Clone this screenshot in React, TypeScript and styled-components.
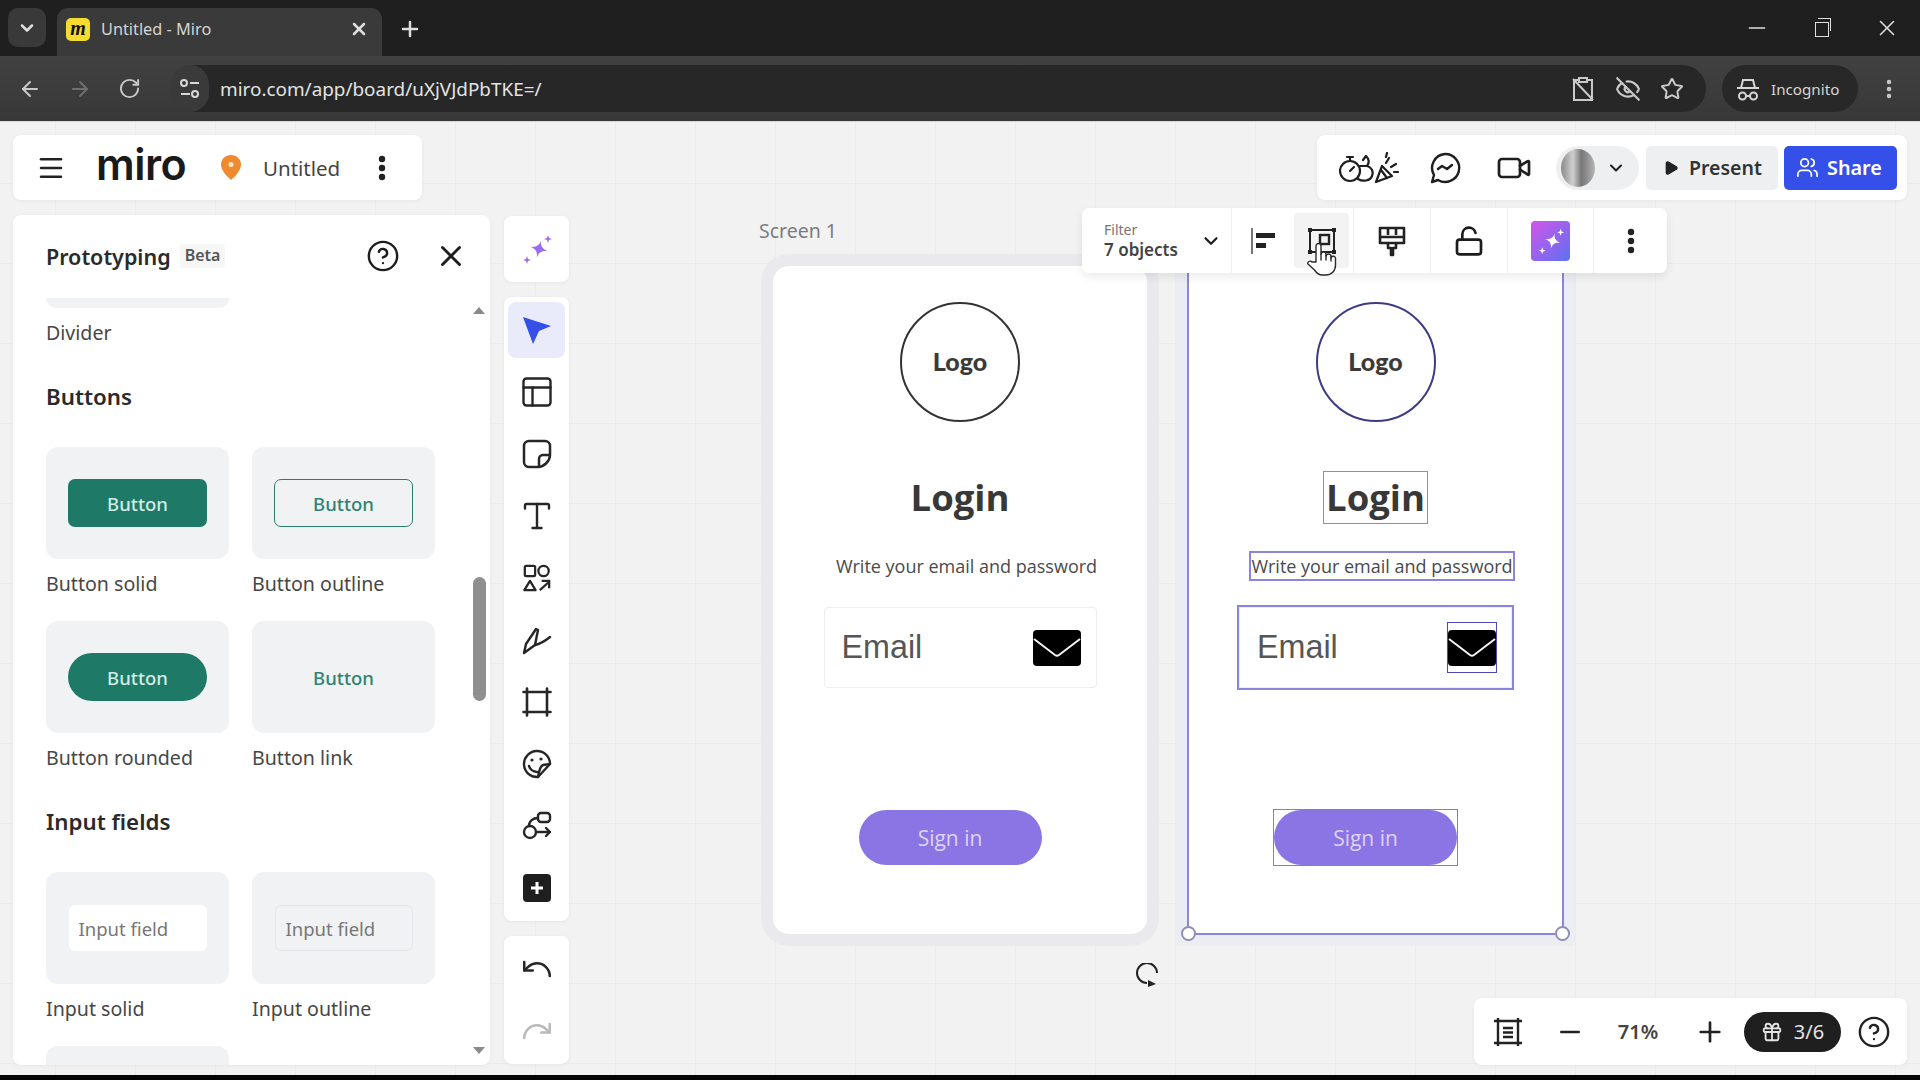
import React from "react";
import styled, { createGlobalStyle } from "styled-components";
import {
  ArrowLeft,
  ArrowRight,
  ChevronDown,
  CircleHelp,
  EllipsisVertical,
  EyeOff,
  Gift,
  LockOpen,
  Menu,
  Minus,
  PanelsTopLeft,
  Play,
  Plus,
  Redo,
  RotateCw,
  Star,
  Type,
  Undo,
  Users,
  Video,
  X,
} from "lucide-react";

const GlobalStyle = createGlobalStyle`
  html, body {
    margin: 0;
    padding: 0;
    background: #000;
    overflow: hidden;
  }
  * {
    box-sizing: border-box;
  }
`;

const UI_FONT = `"Noto Sans", "Open Sans", sans-serif`;

const Page = styled.div`
  width: 1920px;
  height: 1080px;
  display: flex;
  flex-direction: column;
  font-family: ${UI_FONT};
  overflow: hidden;
`;

// Browser chrome
const TabStrip = styled.div`
  height: 56px;
  flex: none;
  background: #1f1f1f;
  display: flex;
  align-items: flex-end;
  color: #dedede;
`;

const TabMenu = styled.div`
  width: 38px;
  height: 39px;
  margin: 0 11px 9px 8px;
  border-radius: 10px;
  background: #393939;
  display: flex;
  align-items: center;
  justify-content: center;
`;

const Tab = styled.div`
  width: 325px;
  height: 48px;
  background: #3a3a3a;
  border-radius: 11px 11px 0 0;
  display: flex;
  align-items: center;
  padding: 0 13px 6px 9px;
`;

const Favicon = styled.div`
  width: 24px;
  height: 23px;
  border-radius: 5px;
  background: #f5dc2f;
  color: #111;
  font: italic 700 20px/21px "Liberation Serif", serif;
  text-align: center;
`;

const TabTitle = styled.span`
  flex: 1;
  margin-left: 11px;
  font-size: 16.3px;
  color: #d4d4d4;
`;

const NewTab = styled.div`
  margin: 0 0 15px 16px;
  width: 24px;
  height: 24px;
  display: flex;
`;

const WindowControls = styled.div`
  margin-left: auto;
  height: 56px;
  display: flex;
  align-items: center;
  gap: 45px;
  padding-right: 20px;
`;

const RestoreIcon = styled.div`
  width: 14px;
  height: 15px;
  border: 1.5px solid #e0e0e0;
  position: relative;
  margin-top: 3px;
  &::after {
    content: "";
    position: absolute;
    top: -5px;
    left: 2px;
    width: 12px;
    height: 12px;
    border-top: 1.5px solid #e0e0e0;
    border-right: 1.5px solid #e0e0e0;
  }
`;

const Toolbar = styled.div`
  height: 66px;
  flex: none;
  background: linear-gradient(#414141, #383838);
  border-bottom: 1px solid #d8d8d8;
  display: flex;
  align-items: center;
  padding: 0 17px 0 18px;
  color: #c9c9c9;
`;

const NavButtons = styled.div`
  width: 153px;
  flex: none;
  display: flex;
  align-items: center;
  gap: 26px;
`;

const AddressBar = styled.div`
  width: 1535px;
  flex: none;
  height: 47px;
  border-radius: 24px;
  background: #272727;
  display: flex;
  align-items: center;
  padding-right: 22px;
`;

const SiteChip = styled.div`
  width: 38px;
  height: 47px;
  margin-right: 11px;
  border-radius: 24px;
  background: #3a3a3a;
  display: flex;
  align-items: center;
  justify-content: center;
`;

const Url = styled.span`
  flex: 1;
  font-size: 18.9px;
  color: #e3e3e3;
`;

const OmniIcons = styled.div`
  display: flex;
  align-items: center;
  gap: 19px;
`;

const IncognitoPill = styled.div`
  width: 136px;
  flex: none;
  height: 47px;
  margin-left: 16px;
  border-radius: 24px;
  background: #282828;
  display: flex;
  align-items: center;
  gap: 10px;
  padding-left: 13px;
  font-size: 15.2px;
  color: #d6d6d6;
`;

const BrowserMenu = styled.div`
  margin-left: 19px;
  display: flex;
`;

// Board
const Board = styled.div`
  position: relative;
  flex: 1;
  min-height: 0;
  display: flex;
  justify-content: space-between;
  padding: 13px 13px 10px 13px;
  background-color: #f2f2f3;
  background-image: linear-gradient(#ebebec 1px, transparent 1px),
    linear-gradient(90deg, #ebebec 1px, transparent 1px);
  background-size: 80px 80px;
  background-position: 55px 61px;
`;

const BottomStrip = styled.div`
  height: 5px;
  flex: none;
  background: #050505;
`;

const Canvas = styled.div`
  position: absolute;
  inset: 0;
`;

const ScreenLabel = styled.span`
  position: absolute;
  left: 759px;
  top: 95px;
  font-size: 19.5px;
  line-height: 28px;
  color: #7c7c7c;
`;

const MockFrame = styled.div<{ $left: number; $selected?: boolean }>`
  position: absolute;
  left: ${(p) => p.$left}px;
  top: 144px;
  width: ${(p) => (p.$selected ? 375 : 374)}px;
  height: 668px;
  background: #fff;
  border-radius: ${(p) => (p.$selected ? 0 : 16)}px;
  box-shadow: 0 0 0 12px ${(p) => (p.$selected ? "#ececf3" : "#e9e9ee")};
  outline: ${(p) => (p.$selected ? "2px solid #8a86de" : "none")};
  outline-offset: -1px;
  display: flex;
  flex-direction: column;
  align-items: center;
  padding-top: 36px;
  font-family: "Open Sans", sans-serif;
`;

const LogoCircle = styled.div<{ $selected?: boolean }>`
  width: 120px;
  height: 120px;
  flex: none;
  padding-bottom: 3px;
  border-radius: 50%;
  border: 2px solid ${(p) => (p.$selected ? "#3d3b86" : "#333")};
  display: flex;
  align-items: center;
  justify-content: center;
  font-family: "Lato", sans-serif;
  font-weight: 900;
  font-size: 25px;
  color: #3a3a3a;
`;

const LoginTitle = styled.div<{ $selected?: boolean }>`
  margin-top: 50px;
  padding: 0 2px;
  font-size: 36.5px;
  line-height: 51px;
  font-weight: 700;
  color: #383838;
  outline: ${(p) => (p.$selected ? "1.5px solid #8a86de" : "none")};
`;

const Hint = styled.div<{ $selected?: boolean }>`
  margin: 30px 0 0 13px;
  font-size: 18px;
  line-height: 26px;
  color: #4a4a4a;
  white-space: nowrap;
  outline: ${(p) => (p.$selected ? "2px solid #8a86de" : "none")};
`;

const EmailField = styled.div<{ $selected?: boolean }>`
  width: 273px;
  height: 81px;
  flex: none;
  margin-top: 28px;
  padding: 0 15px 0 17px;
  border-radius: ${(p) => (p.$selected ? 0 : 4)}px;
  border: 1px solid #eeeeef;
  outline: ${(p) => (p.$selected ? "2px solid #8a86de" : "none")};
  display: flex;
  align-items: center;
  justify-content: space-between;
  font-family: "Liberation Sans", sans-serif;
  font-size: 32.3px;
  color: #565656;
`;

const EnvelopeBox = styled.div<{ $selected?: boolean }>`
  height: 49px;
  padding-top: 7px;
  outline: ${(p) => (p.$selected ? "1px solid #4d49b0" : "none")};
  display: flex;
`;

const SignInBox = styled.div<{ $selected?: boolean }>`
  width: 183px;
  height: 55px;
  flex: none;
  margin: 122px 20px 0 0;
  outline: ${(p) => (p.$selected ? "1.5px solid #7f7bd8" : "none")};
`;

const SignInButton = styled.div`
  width: 100%;
  height: 100%;
  border-radius: 28px;
  background: #8b74e4;
  color: #ddd3f7;
  font-size: 21px;
  display: flex;
  align-items: center;
  justify-content: center;
`;

const Handle = styled.span<{ $side: "left" | "right" }>`
  position: absolute;
  bottom: -7px;
  ${(p) => p.$side}: -7px;
  width: 15px;
  height: 15px;
  border-radius: 50%;
  background: #fff;
  border: 2px solid #8f8fb5;
`;

const RotateCursor = styled.div`
  position: absolute;
  left: 1134px;
  top: 841px;
  display: flex;
`;

const HandCursor = styled.div`
  position: absolute;
  left: 1306px;
  top: 120px;
  display: flex;
  z-index: 6;
`;

// Floating selection toolbar
const ContextMenu = styled.div`
  position: absolute;
  left: 1082px;
  top: 86px;
  z-index: 5;
  height: 65px;
  display: flex;
  background: #fff;
  border-radius: 7px;
  box-shadow: 0 4px 10px rgba(0, 0, 0, 0.08);
`;

const ContextCell = styled.div<{ $width: number; $plain?: boolean }>`
  width: ${(p) => p.$width}px;
  display: flex;
  align-items: center;
  justify-content: center;
  border-right: ${(p) => (p.$plain ? "none" : "1px solid #f0f0f1")};
  color: #1c1c1c;
`;

const FilterCell = styled(ContextCell)`
  justify-content: space-between;
  padding: 0 9px 0 22px;
`;

const FilterText = styled.div`
  display: flex;
  flex-direction: column;
`;

const FilterLabel = styled.span`
  font-size: 14px;
  line-height: 18px;
  color: #767676;
`;

const FilterValue = styled.span`
  font-size: 17px;
  line-height: 22px;
  font-weight: 600;
  color: #444;
`;

const AlignGroup = styled.div`
  flex: 1;
  display: flex;
  align-items: center;
  justify-content: space-between;
  padding: 0 4px 0 16px;
`;

const HoverTool = styled.div`
  width: 55px;
  height: 55px;
  border-radius: 4px;
  background: #f3f3f4;
  display: flex;
  align-items: center;
  justify-content: center;
`;

const AiSquare = styled.div`
  width: 39px;
  height: 40px;
  border-radius: 4px;
  background: linear-gradient(135deg, #d156e8, #5d71f2);
  display: flex;
  align-items: center;
  justify-content: center;
`;

// Left side
const LeftRail = styled.div`
  position: relative;
  z-index: 2;
  display: flex;
  flex-direction: column;
  gap: 15px;
`;

const Panel = styled.div`
  background: #fff;
  border-radius: 8px;
  box-shadow: 0 1px 4px rgba(0, 0, 0, 0.05);
`;

const BoardBar = styled(Panel)`
  width: 409px;
  height: 65px;
  flex: none;
  display: flex;
  align-items: center;
  padding: 0 36px 0 23px;
  color: #222;
`;

const MiroLogo = styled.span`
  width: 91px;
  margin: -7px 0 0 30px;
  font-family: "Inter", sans-serif;
  font-size: 43px;
  line-height: 65px;
  font-weight: 600;
  letter-spacing: -0.5px;
  color: #1a1a1a;
`;

const Pin = styled.svg`
  margin-left: 34px;
  flex: none;
`;

const BoardName = styled.span`
  flex: 1;
  margin-left: 22px;
  font-size: 20.5px;
  color: #444;
`;

const Workspace = styled.div`
  display: flex;
  gap: 14px;
  flex: 1;
  min-height: 0;
`;

const Sidebar = styled(Panel)`
  width: 477px;
  display: flex;
  flex-direction: column;
  overflow: hidden;
`;

const SidebarHeader = styled.div`
  height: 83px;
  flex: none;
  display: flex;
  align-items: center;
  padding: 0 22px 1px 33px;
  color: #1d1d1d;
`;

const SidebarTitle = styled.span`
  font-size: 21.5px;
  font-weight: 600;
  color: #2a2a2a;
`;

const BetaChip = styled.span`
  margin-left: 9px;
  padding: 0 5px;
  height: 24px;
  line-height: 23px;
  border-radius: 4px;
  background: #f6f6f7;
  font-size: 16px;
  font-weight: 600;
  color: #555;
`;

const HeaderActions = styled.div`
  margin-left: auto;
  display: flex;
  align-items: center;
  gap: 34px;
`;

const SidebarBody = styled.div`
  flex: 1;
  min-height: 0;
  display: flex;
`;

const Library = styled.div`
  flex: 1;
  overflow: hidden;
  padding-left: 33px;
`;

const StubCard = styled.div`
  width: 183px;
  height: 10px;
  background: #f1f2f4;
  border-radius: 0 0 12px 12px;
`;

const ItemLabel = styled.div`
  margin-top: 12px;
  font-size: 19.6px;
  line-height: 26px;
  color: #474747;
`;

const SectionTitle = styled.div`
  margin: 36px 0 35px;
  font-size: 22.3px;
  line-height: 30px;
  font-weight: 600;
  color: #2a2a2a;
`;

const ItemGrid = styled.div`
  display: grid;
  grid-template-columns: 183px 183px;
  column-gap: 23px;
  row-gap: 24px;
`;

const ItemCard = styled.div`
  height: 112px;
  background: #f1f2f4;
  border-radius: 12px;
  display: flex;
  align-items: center;
  justify-content: center;
`;

const SampleButton = styled.div<{ $variant: "solid" | "outline" | "rounded" | "link" }>`
  width: 139px;
  height: 48px;
  display: flex;
  align-items: center;
  justify-content: center;
  font-size: 18.5px;
  font-weight: 500;
  border-radius: ${(p) => (p.$variant === "rounded" ? 24 : 7)}px;
  background: ${(p) =>
    p.$variant === "solid" || p.$variant === "rounded" ? "#1e7a66" : "transparent"};
  border: ${(p) => (p.$variant === "outline" ? "1.5px solid #2b7f6c" : "none")};
  color: ${(p) =>
    p.$variant === "solid" || p.$variant === "rounded" ? "#d5ebe5" : "#2f8370"};
`;

const SampleInput = styled.div<{ $outline?: boolean }>`
  width: 138px;
  height: 46px;
  display: flex;
  align-items: center;
  padding-left: 10px;
  border-radius: 6px;
  font-size: 18.5px;
  color: #777;
  background: ${(p) => (p.$outline ? "transparent" : "#fff")};
  border: ${(p) => (p.$outline ? "1px solid #e5e6e9" : "none")};
`;

const Scrollbar = styled.div`
  width: 18px;
  flex: none;
  margin-right: 2px;
  display: flex;
  flex-direction: column;
  align-items: center;
  padding: 9px 0 11px;
`;

const ScrollTrack = styled.div`
  flex: 1;
  width: 13px;
  padding-top: 263px;
`;

const ScrollThumb = styled.div`
  width: 13px;
  height: 124px;
  border-radius: 7px;
  background: #8f8f8f;
`;

const ScrollArrow = styled.span<{ $down?: boolean }>`
  width: 0;
  height: 0;
  border-left: 6px solid transparent;
  border-right: 6px solid transparent;
  ${(p) => (p.$down ? "border-top" : "border-bottom")}: 7px solid #8a8a8a;
`;

const ToolRail = styled.div`
  width: 65px;
  display: flex;
  flex-direction: column;
  gap: 15px;
  padding-top: 1px;
`;

const ToolPanel = styled(Panel)`
  display: flex;
  flex-direction: column;
  align-items: center;
  gap: 6px;
  padding: 5px 4px;
`;

const ToolButton = styled.div<{ $active?: boolean }>`
  width: 57px;
  height: 56px;
  border-radius: 8px;
  background: ${(p) => (p.$active ? "#e9ebfb" : "transparent")};
  display: flex;
  align-items: center;
  justify-content: center;
  color: #262626;
`;

// Right side
const RightRail = styled.div`
  position: relative;
  z-index: 2;
  display: flex;
  flex-direction: column;
  justify-content: space-between;
  align-items: flex-end;
`;

const ActionBar = styled(Panel)`
  width: 590px;
  height: 65px;
  display: flex;
  align-items: center;
  padding-left: 22px;
  color: #1e1e1e;
`;

const ActionIcon = styled.div<{ $gap: number }>`
  margin-left: ${(p) => p.$gap}px;
  display: flex;
`;

const AvatarPill = styled.div`
  width: 83px;
  height: 44px;
  margin-left: 24px;
  border-radius: 22px;
  background: #eeeff1;
  display: flex;
  align-items: center;
  padding-left: 5px;
  gap: 11px;
`;

const Avatar = styled.div`
  width: 34px;
  height: 38px;
  border-radius: 50%;
  background: linear-gradient(90deg, #8a8a8a, #cfcfcf 35%, #777 60%, #b5b5b5);
`;

const PresentButton = styled.div`
  width: 132px;
  height: 44px;
  margin-left: 7px;
  border-radius: 5px;
  background: #eeeff1;
  display: flex;
  align-items: center;
  gap: 10px;
  padding-left: 17px;
  font-size: 19.5px;
  font-weight: 600;
  color: #333;
`;

const ShareButton = styled.div`
  width: 113px;
  height: 44px;
  margin-left: 6px;
  border-radius: 5px;
  background: #3450e8;
  display: flex;
  align-items: center;
  gap: 8px;
  padding-left: 12px;
  font-size: 19.8px;
  font-weight: 600;
  color: #fff;
`;

const ZoomBar = styled(Panel)`
  height: 67px;
  display: flex;
  align-items: center;
  color: #222;
`;

const ZoomCell = styled.div<{ $width: number }>`
  width: ${(p) => p.$width}px;
  display: flex;
  align-items: center;
  justify-content: center;
`;

const ZoomValue = styled.span`
  font-size: 20px;
  font-weight: 600;
  color: #444;
`;

const GiftPill = styled.div`
  width: 97px;
  height: 40px;
  margin-left: 2px;
  border-radius: 20px;
  background: #1f1f1f;
  display: flex;
  align-items: center;
  justify-content: center;
  gap: 11px;
  font-size: 20px;
  color: #e4e4e4;
`;

// Hand drawn icons
const Sparkle = ({ size = 32, color = "#9a6cf0" }: { size?: number; color?: string }) => (
  <svg width={size} height={size} viewBox="0 0 32 32" fill={color}>
    <path d="M18 7c.6 5.6 2.6 8 9 9-6.4 1-8.4 3.4-9 9-.6-5.6-2.600-8-9-9 6.4-1 8.4-3.4 9-9z" transform="rotate(14 18 16)" />
    <path d="M27 2l1 3 3 1-3 1-1 3-1-3-3-1 3-1z" />
    <path d="M6 23l1 3 3 1-3 1-1 3-1-3-3-1 3-1z" />
  </svg>
);

const SelectArrow = () => (
  <svg width="32" height="32" viewBox="0 0 32 32" fill="#3450e8">
    <path d="M2 3l28 9-12 5-6 13z" />
  </svg>
);

const NoteIcon = () => (
  <svg width="30" height="30" viewBox="0 0 30 30" fill="none" stroke="currentColor" strokeWidth="2.5" strokeLinejoin="round">
    <path d="M7 2h16a5 5 0 0 1 5 5v9c0 6-6 12-12 12H7a5 5 0 0 1-5-5V7a5 5 0 0 1 5-5z" />
    <path d="M28 16h-7a4 4 0 0 0-4 4v8" />
  </svg>
);

const ShapesIcon = () => (
  <svg width="30" height="30" viewBox="0 0 32 32" fill="none" stroke="currentColor" strokeWidth="2.4">
    <rect x="3" y="3" width="11" height="11" rx="1.5" />
    <circle cx="23" cy="8.5" r="5.5" />
    <path d="M8.5 19l6 10h-12z" strokeLinejoin="round" />
    <path d="M19 29l10-9M21 19h8v8" />
  </svg>
);

const PenIcon = () => (
  <svg width="32" height="32" viewBox="0 0 32 32" fill="none" stroke="currentColor" strokeWidth="2.4" strokeLinejoin="round" strokeLinecap="round">
    <path d="M3 29l2-9L15 5l2 1-3 15z" />
    <path d="M14 21c5-1 10-4 15-8" />
  </svg>
);

const FrameIcon = () => (
  <svg width="30" height="30" viewBox="0 0 30 30" fill="none" stroke="currentColor" strokeWidth="2.6" strokeLinecap="round">
    <path d="M1.500 5h27M1.500 25h27M5 1.500v27M25 1.500v27" />
  </svg>
);

const StickerIcon = () => (
  <svg width="30" height="30" viewBox="0 0 30 30" fill="none" stroke="currentColor" strokeWidth="2.4" strokeLinejoin="round" strokeLinecap="round">
    <path d="M28 15A13 13 0 1 0 16 28z" />
    <path d="M28 15l-7 1c-3 1-4 6-5 12" />
    <path d="M7 17c1 3 4 6 8 6" />
    <circle cx="10" cy="11" r="1.6" fill="currentColor" stroke="none" />
    <circle cx="19" cy="10" r="1.6" fill="currentColor" stroke="none" />
  </svg>
);

const FlowIcon = () => (
  <svg width="32" height="32" viewBox="0 0 32 32" fill="none" stroke="currentColor" strokeWidth="2.4" strokeLinecap="round" strokeLinejoin="round">
    <rect x="17" y="3" width="12" height="9" rx="3" />
    <circle cx="9" cy="22" r="6" />
    <path d="M8 16c0-5 4-8 9-8M15 22h14M25 18l4 4-4 4" />
  </svg>
);

const AddIcon = () => (
  <svg width="30" height="30" viewBox="0 0 30 30">
    <rect x="1" y="1" width="28" height="28" rx="4" fill="#1f1f1f" />
    <path d="M15 9v12M9 15h12" stroke="#fff" strokeWidth="3" />
  </svg>
);

const AlignIcon = () => (
  <svg width="30" height="30" viewBox="0 0 30 30">
    <rect x="3" y="2" width="2" height="26" fill="#777" />
    <rect x="8" y="7" width="19" height="5" fill="#222" />
    <rect x="8" y="17" width="10" height="5" fill="#222" />
  </svg>
);

const FrameGroupIcon = () => (
  <svg width="30" height="28" viewBox="0 0 30 28" fill="none" stroke="#222" strokeWidth="2">
    <rect x="3" y="3" width="24" height="22" />
    <rect x="13" y="8" width="9" height="9" strokeWidth="2.4" />
    <path d="M1 1h4v4H1zM25 1h4v4h-4zM1 23h4v4H1zM25 23h4v4h-4z" fill="#222" stroke="none" />
  </svg>
);

const HandIcon = () => (
  <svg width="31" height="34" viewBox="0 0 31 34" fill="#fff" stroke="#2a2a2a" strokeWidth="1.4" strokeLinejoin="round" strokeLinecap="round">
    <path d="M10 20V4a2.500 2.500 0 0 1 5 0v8a2.500 2.500 0 0 1 5 1v1a2.500 2.500 0 0 1 5 1v1a2.200 2.200 0 0 1 4.500 1v6c0 6-4 10-10 10h-3c-4 0-6-2-8-5L2 22c-1-2 2-4 4-2z" />
    <path d="M15 12v6M20 13v5M25 15v4" />
  </svg>
);

const BrushIcon = () => (
  <svg width="30" height="32" viewBox="0 0 30 32" fill="none" stroke="#222" strokeWidth="2.6" strokeLinejoin="round">
    <path d="M3 3h24v15H3zM3 12h24M11 3v7M19 3v7M11 18v5h3v7h2v-7h3v-5" />
  </svg>
);

const MoreDots = () => (
  <svg width="8" height="26" viewBox="0 0 8 26" fill="#222">
    <circle cx="4" cy="4" r="3.2" />
    <circle cx="4" cy="13" r="3.2" />
    <circle cx="4" cy="22" r="3.2" />
  </svg>
);

const Envelope = () => (
  <svg width="48" height="36" viewBox="0 0 48 36">
    <rect width="48" height="36" rx="4" fill="#000" />
    <path d="M1 9l21 16c1.500 1 2.500 1 4 0L47 9" fill="none" stroke="#f4f4f4" strokeWidth="2" />
  </svg>
);

const TuneIcon = () => (
  <svg width="22" height="22" viewBox="0 0 22 22" fill="none" stroke="#d8d8d8" strokeWidth="2">
    <circle cx="5" cy="5" r="3" />
    <path d="M11 5h9M2 16h9" />
    <circle cx="16" cy="16" r="3" />
  </svg>
);

const IncognitoIcon = () => (
  <svg width="26" height="26" viewBox="0 0 26 26" fill="none" stroke="#d6d6d6" strokeWidth="2">
    <path d="M2 12h22M6 12l2-8h10l2 8" />
    <circle cx="7.5" cy="20" r="3.5" />
    <circle cx="18.5" cy="20" r="3.5" />
    <path d="M11 20h4" />
  </svg>
);

const ClipboardOff = () => (
  <svg width="26" height="26" viewBox="0 0 26 26" fill="none" stroke="#c9c9c9" strokeWidth="2">
    <path d="M9 4H4v20h18V4h-5M9 2h8v4H9zM3 3l20 21" />
  </svg>
);

const ReactionsIcon = () => (
  <svg width="60" height="32" viewBox="0 0 60 32" fill="none" stroke="currentColor" strokeWidth="2.2" strokeLinecap="round" strokeLinejoin="round">
    <circle cx="11" cy="19" r="10" />
    <path d="M11 19l4-4M8 5h6M11 5v4" />
    <path d="M24 8l3-4c3 3 4 6 1 10 4 1 7 5 5 10-2 5-9 6-14 3" />
    <path d="M21 14h7" />
    <path d="M37 30l6-16 10 10zM42 18l6 8M47 11l3-5M52 15l5-3M47 5l1-4M55 20h4" />
  </svg>
);

const MessengerIcon = () => (
  <svg width="34" height="34" viewBox="0 0 34 34" fill="none" stroke="currentColor" strokeWidth="2.4" strokeLinejoin="round" strokeLinecap="round">
    <path d="M17 3a14 14 0 1 1-7 26l-6 2 2-7A14 14 0 0 1 17 3z" />
    <path d="M10 18l4-3 5 3 5-4" />
  </svg>
);

const FitIcon = () => (
  <svg width="30" height="30" viewBox="0 0 30 30" fill="none" stroke="#222" strokeWidth="2.4">
    <path d="M1 4h28M1 26h28M5 1v28M25 1v28M10 11h10M10 15.5h10M10 20h10" />
  </svg>
);

const PinIcon = () => (
  <Pin width="20" height="25" viewBox="0 0 20 25">
    <path d="M10 0c5.500 0 10 4 10 9.500 0 6-6 12-10 15.500C6 21.500 0 15.500 0 9.500 0 4 4.500 0 10 0z" fill="#ef8a2e" />
    <circle cx="10" cy="9.5" r="2.5" fill="#fbe3c8" />
  </Pin>
);

const LoginScreen = ({ left, selected }: { left: number; selected?: boolean }) => (
  <MockFrame $left={left} $selected={selected}>
    <LogoCircle $selected={selected}>Logo</LogoCircle>
    <LoginTitle $selected={selected}>Login</LoginTitle>
    <Hint $selected={selected}>Write your email and password</Hint>
    <EmailField $selected={selected}>
      Email
      <EnvelopeBox $selected={selected}>
        <Envelope />
      </EnvelopeBox>
    </EmailField>
    <SignInBox $selected={selected}>
      <SignInButton>Sign in</SignInButton>
    </SignInBox>
    {selected && (
      <>
        <Handle $side="left" />
        <Handle $side="right" />
      </>
    )}
  </MockFrame>
);

const Item = ({ label, children }: { label: string; children?: React.ReactNode }) => (
  <div>
    <ItemCard>{children}</ItemCard>
    <ItemLabel>{label}</ItemLabel>
  </div>
);

export default function App() {
  return (
    <Page>
      <GlobalStyle />
      <TabStrip>
        <TabMenu>
          <ChevronDown size={20} strokeWidth={3} />
        </TabMenu>
        <Tab>
          <Favicon>m</Favicon>
          <TabTitle>Untitled - Miro</TabTitle>
          <X size={20} strokeWidth={3} />
        </Tab>
        <NewTab>
          <Plus size={24} strokeWidth={2.5} />
        </NewTab>
        <WindowControls>
          <Minus size={26} strokeWidth={1.5} />
          <RestoreIcon />
          <X size={26} strokeWidth={1.5} />
        </WindowControls>
      </TabStrip>
      <Toolbar>
        <NavButtons>
          <ArrowLeft size={24} />
          <ArrowRight size={24} color="#6f6f6f" />
          <RotateCw size={23} />
        </NavButtons>
        <AddressBar>
          <SiteChip>
            <TuneIcon />
          </SiteChip>
          <Url>miro.com/app/board/uXjVJdPbTKE=/</Url>
          <OmniIcons>
            <ClipboardOff />
            <EyeOff size={26} />
            <Star size={24} />
          </OmniIcons>
        </AddressBar>
        <IncognitoPill>
          <IncognitoIcon />
          Incognito
        </IncognitoPill>
        <BrowserMenu>
          <EllipsisVertical size={24} strokeWidth={2.5} />
        </BrowserMenu>
      </Toolbar>
      <Board>
        <Canvas>
          <ScreenLabel>Screen 1</ScreenLabel>
          <LoginScreen left={773} />
          <LoginScreen left={1188} selected />
          <RotateCursor>
            <svg width="26" height="28" viewBox="0 0 26 28" fill="none" stroke="#222" strokeWidth="2">
              <path d="M23 10A10 10 0 1 0 13 20" />
              <path d="M14 17l8 4-8 3z" fill="#222" stroke="none" />
            </svg>
          </RotateCursor>
          <ContextMenu>
            <FilterCell $width={150}>
              <FilterText>
                <FilterLabel>Filter</FilterLabel>
                <FilterValue>7 objects</FilterValue>
              </FilterText>
              <ChevronDown size={22} strokeWidth={2.4} />
            </FilterCell>
            <ContextCell $width={122}>
              <AlignGroup>
                <AlignIcon />
                <HoverTool>
                  <FrameGroupIcon />
                </HoverTool>
              </AlignGroup>
            </ContextCell>
            <ContextCell $width={77}>
              <BrushIcon />
            </ContextCell>
            <ContextCell $width={77}>
              <LockOpen size={32} strokeWidth={2} />
            </ContextCell>
            <ContextCell $width={86}>
              <AiSquare>
                <Sparkle size={28} color="#fff" />
              </AiSquare>
            </ContextCell>
            <ContextCell $width={73} $plain>
              <MoreDots />
            </ContextCell>
          </ContextMenu>
          <HandCursor>
            <HandIcon />
          </HandCursor>
        </Canvas>

        <LeftRail>
          <BoardBar>
            <Menu size={30} strokeWidth={2} />
            <MiroLogo>miro</MiroLogo>
            <PinIcon />
            <BoardName>Untitled</BoardName>
            <MoreDots />
          </BoardBar>
          <Workspace>
            <Sidebar>
              <SidebarHeader>
                <SidebarTitle>Prototyping</SidebarTitle>
                <BetaChip>Beta</BetaChip>
                <HeaderActions>
                  <CircleHelp size={34} strokeWidth={1.7} />
                  <X size={34} strokeWidth={2} />
                </HeaderActions>
              </SidebarHeader>
              <SidebarBody>
                <Library>
                  <StubCard />
                  <ItemLabel>Divider</ItemLabel>
                  <SectionTitle>Buttons</SectionTitle>
                  <ItemGrid>
                    <Item label="Button solid">
                      <SampleButton $variant="solid">Button</SampleButton>
                    </Item>
                    <Item label="Button outline">
                      <SampleButton $variant="outline">Button</SampleButton>
                    </Item>
                    <Item label="Button rounded">
                      <SampleButton $variant="rounded">Button</SampleButton>
                    </Item>
                    <Item label="Button link">
                      <SampleButton $variant="link">Button</SampleButton>
                    </Item>
                  </ItemGrid>
                  <SectionTitle>Input fields</SectionTitle>
                  <ItemGrid>
                    <Item label="Input solid">
                      <SampleInput>Input field</SampleInput>
                    </Item>
                    <Item label="Input outline">
                      <SampleInput $outline>Input field</SampleInput>
                    </Item>
                    <ItemCard />
                  </ItemGrid>
                </Library>
                <Scrollbar>
                  <ScrollArrow />
                  <ScrollTrack>
                    <ScrollThumb />
                  </ScrollTrack>
                  <ScrollArrow $down />
                </Scrollbar>
              </SidebarBody>
            </Sidebar>
            <ToolRail>
              <ToolPanel>
                <ToolButton>
                  <Sparkle />
                </ToolButton>
              </ToolPanel>
              <ToolPanel>
                <ToolButton $active>
                  <SelectArrow />
                </ToolButton>
                <ToolButton>
                  <PanelsTopLeft size={36} strokeWidth={1.6} />
                </ToolButton>
                <ToolButton>
                  <NoteIcon />
                </ToolButton>
                <ToolButton>
                  <Type size={36} strokeWidth={1.6} />
                </ToolButton>
                <ToolButton>
                  <ShapesIcon />
                </ToolButton>
                <ToolButton>
                  <PenIcon />
                </ToolButton>
                <ToolButton>
                  <FrameIcon />
                </ToolButton>
                <ToolButton>
                  <StickerIcon />
                </ToolButton>
                <ToolButton>
                  <FlowIcon />
                </ToolButton>
                <ToolButton>
                  <AddIcon />
                </ToolButton>
              </ToolPanel>
              <ToolPanel>
                <ToolButton>
                  <Undo size={34} strokeWidth={1.8} />
                </ToolButton>
                <ToolButton>
                  <Redo size={34} strokeWidth={1.8} color="#b9b9b9" />
                </ToolButton>
              </ToolPanel>
            </ToolRail>
          </Workspace>
        </LeftRail>

        <RightRail>
          <ActionBar>
            <ReactionsIcon />
            <ActionIcon $gap={29}>
              <MessengerIcon />
            </ActionIcon>
            <ActionIcon $gap={34}>
              <Video size={36} strokeWidth={1.8} />
            </ActionIcon>
            <AvatarPill>
              <Avatar />
              <ChevronDown size={20} strokeWidth={2.4} />
            </AvatarPill>
            <PresentButton>
              <Play size={16} fill="#222" color="#222" />
              Present
            </PresentButton>
            <ShareButton>
              <Users size={23} strokeWidth={1.8} />
              Share
            </ShareButton>
          </ActionBar>
          <ZoomBar>
            <ZoomCell $width={68}>
              <FitIcon />
            </ZoomCell>
            <ZoomCell $width={56}>
              <Minus size={30} strokeWidth={2} />
            </ZoomCell>
            <ZoomCell $width={80}>
              <ZoomValue>71%</ZoomValue>
            </ZoomCell>
            <ZoomCell $width={64}>
              <Plus size={32} strokeWidth={2} />
            </ZoomCell>
            <GiftPill>
              <Gift size={22} strokeWidth={2} />
              3/6
            </GiftPill>
            <ZoomCell $width={66}>
              <CircleHelp size={34} strokeWidth={1.7} />
            </ZoomCell>
          </ZoomBar>
        </RightRail>
      </Board>
      <BottomStrip />
    </Page>
  );
}
